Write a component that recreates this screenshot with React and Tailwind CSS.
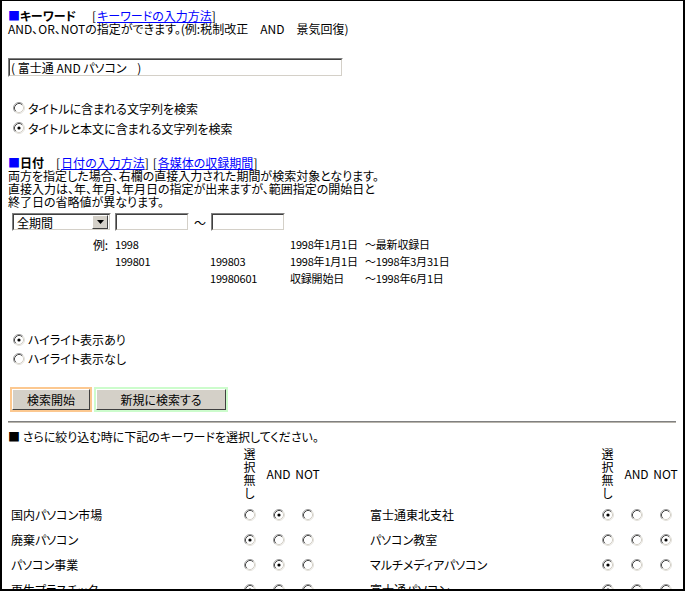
import React from "react";

function Radio({ checked }) {
  return (
    <svg width="12" height="12" viewBox="0 0 12 12" className="shrink-0">
      <circle cx="6" cy="6" r="5" fill="#fff" />
      <path d="M9.89 2.11 A5.5 5.5 0 0 0 2.11 9.89" fill="none" stroke="#9a9a9a" strokeWidth="1" />
      <path d="M9.89 2.11 A5.5 5.5 0 0 1 2.11 9.89" fill="none" stroke="#e4e2dc" strokeWidth="1" />
      <path d="M9.18 2.82 A4.5 4.5 0 0 0 2.82 9.18" fill="none" stroke="#4a4a4a" strokeWidth="1" />
      <path d="M9.18 2.82 A4.5 4.5 0 0 1 2.82 9.18" fill="none" stroke="#d4d0c8" strokeWidth="1" />
      {checked && <circle cx="6" cy="6" r="1.6" fill="#000" />}
    </svg>
  );
}

function TextBox({ className, children }) {
  return (
    <div className={`border border-t-[#808080] border-l-[#808080] border-b-[#ffffff] border-r-[#ffffff] ${className}`}>
      <div className="h-full border border-t-[#404040] border-l-[#404040] border-b-[#d4d0c8] border-r-[#d4d0c8] bg-white flex items-center pl-[1px]">
        {children}
      </div>
    </div>
  );
}

function Button({ ring, className, children }) {
  return (
    <div className={`border-2 ${ring}`}>
      <div className={`h-[21px] bg-[#d4d0c8] border border-t-white border-l-white border-b-[#404040] border-r-[#404040] flex items-center justify-center ${className}`}>
        {children}
      </div>
    </div>
  );
}

const leftRows = [
  ["国内パソコン市場", 1],
  ["廃棄パソコン", 0],
  ["パソコン事業", 1],
  ["再生プラスチック", 0],
];

const rightRows = [
  ["富士通東北支社", 0],
  ["パソコン教室", 2],
  ["マルチメディアパソコン", 0],
  ["富士通パソコン", 0],
];

function Choices({ value }) {
  return (
    <>
      {[0, 1, 2].map((i) => (
        <div key={i} className="w-[29px] flex justify-center">
          <Radio checked={value === i} />
        </div>
      ))}
    </>
  );
}

function HeaderCells() {
  return (
    <>
      <div className="w-[29px] flex flex-col items-center">
        {["選", "択", "無", "し"].map((c) => (
          <div key={c} className="h-[13px]">{c}</div>
        ))}
      </div>
      <div className="w-[29px] flex justify-center">AND</div>
      <div className="w-[29px] flex justify-center">NOT</div>
    </>
  );
}

export default function App() {
  return (
    <div className="h-[594px] w-[686px] bg-white text-black text-[12px] leading-[13px] font-['Noto_Sans_CJK_JP','Noto_Sans',sans-serif] [font-feature-settings:'palt']">
      <div className="h-[591px] w-[685px] overflow-hidden border-x-2 border-t border-b-2 border-black pl-[6px] pt-[8px]">
        {/* keyword */}
        <div className="h-[13px] whitespace-nowrap">
          <span className="text-[#0000ff]">■</span>
          <b>キーワード</b>
          <span className="ml-[16px]">[</span>
          <a className="text-[#0000ff] underline ml-[1px]">キーワードの入力方法</a>
          <span>]</span>
        </div>
        <div className="h-[13px] whitespace-nowrap">
          AND、OR、NOTの指定ができます。(例:税制改正　AND　景気回復)
        </div>
        <TextBox className="mt-[23px] w-[335px] h-[19px]">
          <span>(&nbsp;富士通 AND パソコン&nbsp;&nbsp;&nbsp;&nbsp;)</span>
        </TextBox>

        <div className="mt-[21px]">
          <div className="flex items-center gap-[3px] h-[20px] pl-[5px]">
            <Radio />
            <span>タイトルに含まれる文字列を検索</span>
          </div>
          <div className="flex items-center gap-[3px] h-[20px] pl-[5px]">
            <Radio checked />
            <span>タイトルと本文に含まれる文字列を検索</span>
          </div>
        </div>

        {/* date */}
        <div className="mt-[18px] h-[13px] whitespace-nowrap">
          <span className="text-[#0000ff]">■</span>
          <b>日付</b>
          <span className="ml-[12px]">[</span>
          <a className="text-[#0000ff] underline ml-[1px]">日付の入力方法</a>
          <span>]</span>
          <span className="ml-[4px]">[</span>
          <a className="text-[#0000ff] underline ml-[1px]">各媒体の収録期間</a>
          <span>]</span>
        </div>
        <div className="whitespace-nowrap">
          <div className="h-[13px]">両方を指定した場合、右欄の直接入力された期間が検索対象となります。</div>
          <div className="h-[13px]">直接入力は、年、年月、年月日の指定が出来ますが、範囲指定の開始日と</div>
          <div className="h-[13px]">終了日の省略値が異なります。</div>
        </div>

        <div className="mt-[5px] ml-[4px] flex items-center">
          <TextBox className="w-[99px] h-[18px]">
            <span className="flex-1 pl-[2px]">全期間</span>
            <span className="w-[16px] h-[14px] mr-[1px] bg-[#d4d0c8] border border-t-white border-l-white border-b-[#404040] border-r-[#404040] flex items-center justify-center">
              <svg width="7" height="4" viewBox="0 0 7 4">
                <path d="M0 0h7L3.5 4z" fill="#000" />
              </svg>
            </span>
          </TextBox>
          <TextBox className="ml-[4px] w-[74px] h-[18px]" />
          <span className="w-[22px] text-center">〜</span>
          <TextBox className="w-[74px] h-[18px]" />
        </div>

        <div className="mt-[5px] grid grid-cols-[107px_95px_80px_75px_auto] auto-rows-[17px] items-center whitespace-nowrap text-[11px] tracking-[-0.2px]">
          <div className="text-right pr-[7px] text-[12px]">例:</div>
          <div>1998</div>
          <div></div>
          <div>1998年1月1日</div>
          <div>〜最新収録日</div>

          <div></div>
          <div>199801</div>
          <div>199803</div>
          <div>1998年1月1日</div>
          <div>〜1998年3月31日</div>

          <div></div>
          <div></div>
          <div>19980601</div>
          <div>収録開始日</div>
          <div>〜1998年6月1日</div>
        </div>

        {/* highlight */}
        <div className="mt-[43px]">
          <div className="flex items-center gap-[3px] h-[19px] pl-[5px]">
            <Radio checked />
            <span>ハイライト表示あり</span>
          </div>
          <div className="flex items-center gap-[3px] h-[19px] pl-[5px]">
            <Radio />
            <span>ハイライト表示なし</span>
          </div>
        </div>

        <div className="mt-[19px] ml-[2px] flex gap-[2px]">
          <Button ring="border-[#fcc890]" className="w-[78px]">検索開始</Button>
          <Button ring="border-[#ccfccc]" className="w-[130px]">新規に検索する</Button>
        </div>

        <div className="mt-[9px] w-[668px] border-t border-t-[#808080] border-b border-b-[#b8b4ac]" />

        <div className="mt-[7px] h-[13px] whitespace-nowrap">■ さらに絞り込む時に下記のキーワードを選択してください。</div>

        {/* keyword table */}
        <div className="mt-[4px] flex items-center">
          <div className="w-[224px] ml-[3px]" />
          <HeaderCells />
          <div className="w-[48px]" />
          <div className="w-[223px]" />
          <HeaderCells />
        </div>
        <div className="mt-[3px]">
          {leftRows.map((row, i) => (
            <div key={row[0]} className="flex items-center h-[25px] whitespace-nowrap">
              <div className="w-[224px] ml-[3px]">{row[0]}</div>
              <Choices value={row[1]} />
              <div className="w-[48px]" />
              <div className="w-[223px]">{rightRows[i][0]}</div>
              <Choices value={rightRows[i][1]} />
            </div>
          ))}
        </div>
      </div>
    </div>
  );
}
